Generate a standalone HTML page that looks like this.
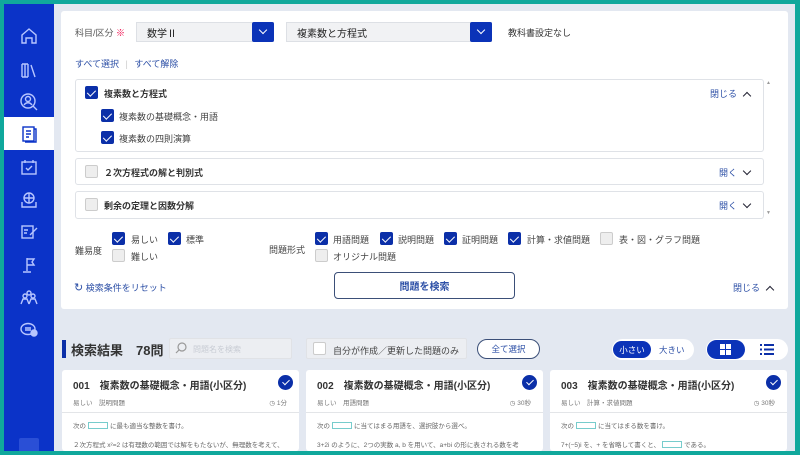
<!DOCTYPE html>
<html><head><meta charset="utf-8"><style>
*{box-sizing:border-box;margin:0;padding:0}
body{width:800px;height:455px;overflow:hidden;background:#10a89c;font-family:"Liberation Sans","Noto Sans CJK JP",sans-serif;color:#333;position:relative}
.a{position:absolute}
#main{left:4px;top:4px;width:791px;height:447px;background:#e3e8f1;overflow:hidden}
#side{left:4px;top:4px;width:50px;height:447px;background:#0b33c8}
.ic{position:absolute;left:15px;width:20px;height:20px}
.panel{left:61px;top:11px;width:727px;height:298px;background:#fff;border-radius:3px}
.sel{height:20px;background:#f1f2f4;border:1px solid #dde0e5;font-size:10px;padding-left:10px;color:#222;display:flex;align-items:center}
.btn{position:absolute;right:-1px;top:-1px;width:22px;height:20px;background:#0b33b8;border-radius:2px}
.btn:after{content:"";position:absolute;left:8px;top:5px;width:5px;height:5px;border-right:1.5px solid #fff;border-bottom:1.5px solid #fff;transform:rotate(45deg)}
.box{border:1px solid #dfe2e7;border-radius:3px;background:#fff}
.cb{position:absolute;width:13px;height:13px;border-radius:2px;background:#0b2fa8}
.cb:after{content:"";position:absolute;left:4px;top:1.5px;width:3.5px;height:7px;border-right:1.7px solid #fff;border-bottom:1.7px solid #fff;transform:rotate(45deg)}
.ucb{position:absolute;width:13px;height:13px;border-radius:2px;background:#eee;border:1px solid #ccc}
.t{position:absolute;font-size:9px;white-space:nowrap;color:#444}
.b{font-weight:bold;color:#333}
.lnk{color:#2c4fa6}
.up,.dn{display:inline-block;width:6px;height:6px;border-left:1.8px solid #223;border-top:1.8px solid #223;margin-left:7px}
.up{transform:rotate(45deg);vertical-align:-2px}
.dn{transform:rotate(225deg);vertical-align:2px}
.card{position:absolute;top:370px;width:237px;height:81px;background:#fff;border-radius:3px;overflow:hidden}
.card .h{position:absolute;left:11px;top:7px;font-size:10px;font-weight:bold;color:#333}
.card .s{position:absolute;left:11px;top:27px;font-size:6.5px;color:#777}
.card .tm{position:absolute;right:12px;top:27px;font-size:6.5px;color:#777}
.card .ok{position:absolute;right:6px;top:5px;width:15px;height:15px;border-radius:50%;background:#0b2fa8}
.card .ok:after{content:"";position:absolute;left:5.5px;top:3px;width:3px;height:6px;border-right:1.7px solid #fff;border-bottom:1.7px solid #fff;transform:rotate(45deg)}
.card .ln{position:absolute;left:0;right:0;top:42px;border-top:1px solid #e3e5e8}
.card .p{position:absolute;left:11px;font-size:6.5px;color:#666;white-space:nowrap}
.bx{display:inline-block;width:20px;height:7px;border:1px solid #7cc;vertical-align:-1px;margin:0 2px}
.fc{display:flex;align-items:center;justify-content:center}
</style></head><body>
<div id="main" class="a"></div>
<div id="side" class="a">
 <svg class="ic" style="top:22px" viewBox="0 0 20 20" fill="none" stroke="#b8c6ff" stroke-width="1.4"><path d="M3 9l7-6 7 6v8h-4v-5h-6v5H3z"/></svg>
 <svg class="ic" style="top:56px" viewBox="0 0 20 20" fill="none" stroke="#b8c6ff" stroke-width="1.4"><path d="M3 4v13M6 4v13M9 4v13M12 5l4 12M3 4h6M3 17h6"/></svg>
 <svg class="ic" style="top:88px" viewBox="0 0 20 20" fill="none" stroke="#b8c6ff" stroke-width="1.4"><circle cx="9" cy="9" r="7"/><circle cx="9" cy="7" r="2.5"/><path d="M5 13c2-3 6-3 8 0M14 14l4 4"/></svg>
 <div class="a" style="left:0;top:113px;width:50px;height:33px;background:#fff"></div>
 <svg class="ic" style="top:120px" viewBox="0 0 20 20" fill="none" stroke="#0b33c8" stroke-width="1.4"><rect x="4" y="3" width="11" height="14"/><path d="M7 7h5M7 10h5M7 13h3M15 5h2v13H6"/></svg>
 <svg class="ic" style="top:154px" viewBox="0 0 20 20" fill="none" stroke="#b8c6ff" stroke-width="1.4"><rect x="3" y="4" width="14" height="12"/><path d="M6 2v3M14 2v3M7 10l2 2 4-4"/></svg>
 <svg class="ic" style="top:186px" viewBox="0 0 20 20" fill="none" stroke="#b8c6ff" stroke-width="1.4"><circle cx="10" cy="8" r="5"/><path d="M5 8h10M10 3v10M3 12v5h14v-5"/></svg>
 <svg class="ic" style="top:218px" viewBox="0 0 20 20" fill="none" stroke="#b8c6ff" stroke-width="1.4"><rect x="3" y="4" width="11" height="12"/><path d="M5 8h4M5 11h3M11 13l7-7"/></svg>
 <svg class="ic" style="top:251px" viewBox="0 0 20 20" fill="none" stroke="#b8c6ff" stroke-width="1.4"><path d="M8 3v13M8 4h7l-2 3 2 3H8M4 17h8"/></svg>
 <svg class="ic" style="top:284px" viewBox="0 0 20 20" fill="none" stroke="#b8c6ff" stroke-width="1.4"><circle cx="6" cy="8" r="2"/><circle cx="14" cy="8" r="2"/><circle cx="10" cy="5" r="2"/><path d="M2 16l2-5h4l2 5M10 16l2-5h4l2 5"/></svg>
 <svg class="ic" style="top:316px" viewBox="0 0 20 20" fill="none" stroke="#b8c6ff" stroke-width="1.4"><ellipse cx="9" cy="9" rx="7" ry="5.5"/><path d="M6 8h6M6 10h6"/><circle cx="15" cy="13" r="3" fill="#b8c6ff"/></svg>
 <div class="a" style="left:15px;top:434px;width:20px;height:14px;background:#2a4fd6;border-radius:2px"></div>
</div>

<div class="a panel"></div>
<div class="t" style="left:75px;top:26px;color:#555">科目/区分 <span style="color:#e04">※</span></div>
<div class="a sel" style="left:136px;top:22px;width:138px">数学Ⅱ<div class="btn"></div></div>
<div class="a sel" style="left:286px;top:22px;width:206px">複素数と方程式<div class="btn"></div></div>
<div class="t" style="left:508px;top:26px;color:#333">教科書設定なし</div>
<div class="t lnk" style="left:75px;top:57px">すべて選択 <span style="color:#ccc;margin:0 4px">|</span> すべて解除</div>

<div class="a box" style="left:75px;top:79px;width:689px;height:73px"></div>
<div class="cb" style="left:85px;top:86px"></div><div class="t b" style="left:104px;top:87px">複素数と方程式</div>
<div class="t lnk" style="left:710px;top:87px">閉じる<span class="up"></span></div>
<div class="cb" style="left:101px;top:109px"></div><div class="t" style="left:119px;top:110px">複素数の基礎概念・用語</div>
<div class="cb" style="left:101px;top:131px"></div><div class="t" style="left:119px;top:132px">複素数の四則演算</div>
<div class="a box" style="left:75px;top:158px;width:689px;height:27px"></div>
<div class="ucb" style="left:85px;top:165px"></div><div class="t b" style="left:104px;top:166px">２次方程式の解と判別式</div>
<div class="t lnk" style="left:719px;top:166px">開く<span class="dn"></span></div>
<div class="a box" style="left:75px;top:191px;width:689px;height:28px"></div>
<div class="ucb" style="left:85px;top:198px"></div><div class="t b" style="left:104px;top:199px">剰余の定理と因数分解</div>
<div class="t lnk" style="left:719px;top:199px">開く<span class="dn"></span></div>
<div class="t" style="left:766px;top:80px;font-size:5px;color:#999">▲</div>
<div class="t" style="left:766px;top:210px;font-size:5px;color:#999">▼</div>

<div class="t" style="left:75px;top:244px">難易度</div>
<div class="cb" style="left:112px;top:232px"></div><div class="t" style="left:131px;top:233px">易しい</div>
<div class="cb" style="left:168px;top:232px"></div><div class="t" style="left:186px;top:233px">標準</div>
<div class="ucb" style="left:112px;top:249px"></div><div class="t" style="left:131px;top:250px">難しい</div>
<div class="t" style="left:269px;top:243px">問題形式</div>
<div class="cb" style="left:315px;top:232px"></div><div class="t" style="left:333px;top:233px">用語問題</div>
<div class="cb" style="left:380px;top:232px"></div><div class="t" style="left:398px;top:233px">説明問題</div>
<div class="cb" style="left:444px;top:232px"></div><div class="t" style="left:462px;top:233px">証明問題</div>
<div class="cb" style="left:508px;top:232px"></div><div class="t" style="left:527px;top:233px">計算・求値問題</div>
<div class="ucb" style="left:600px;top:232px"></div><div class="t" style="left:619px;top:233px">表・図・グラフ問題</div>
<div class="ucb" style="left:315px;top:249px"></div><div class="t" style="left:333px;top:250px">オリジナル問題</div>

<div class="t lnk" style="left:74px;top:281px"><span style="font-size:11px">↻</span> 検索条件をリセット</div>
<div class="a fc" style="left:334px;top:272px;width:181px;height:27px;border:1.5px solid #3b4f78;border-radius:4px;font-size:10px;color:#2c4fa6;font-weight:bold">問題を検索</div>
<div class="t lnk" style="left:733px;top:281px">閉じる<span class="up"></span></div>

<div class="a" style="left:62px;top:340px;width:4px;height:18px;background:#0b2fa8"></div>
<div class="t b" style="left:71px;top:340px;font-size:13px">検索結果　78問</div>
<div class="a" style="left:169px;top:338px;width:123px;height:21px;background:#eceef2;border:1px solid #e0e2e6;border-radius:2px"></div>
<svg class="a" style="left:175px;top:342px" width="12" height="12" viewBox="0 0 12 12" fill="none" stroke="#999" stroke-width="1.2"><circle cx="7" cy="5" r="4"/><path d="M4 8l-3 3"/></svg>
<div class="t" style="left:193px;top:344px;font-size:8px;color:#c8ccd4">問題名を検索</div>
<div class="a" style="left:306px;top:338px;width:161px;height:21px;background:#eceef2;border:1px solid #e0e2e6;border-radius:2px"></div>
<div class="ucb" style="left:313px;top:342px;background:#fff"></div><div class="t" style="left:333px;top:344px">自分が作成／更新した問題のみ</div>
<div class="a fc" style="left:477px;top:339px;width:63px;height:20px;border:1px solid #3b4f78;border-radius:10px;background:#fff;font-size:8.5px;color:#2c4fa6">全て選択</div>
<div class="a" style="left:612px;top:339px;width:82px;height:21px;background:#fff;border-radius:11px"></div>
<div class="a fc" style="left:613px;top:341px;width:38px;height:17px;background:#0b33b8;border-radius:9px;color:#fff;font-size:8.5px">小さい</div>
<div class="t lnk" style="left:659px;top:344px;font-size:8.5px">大きい</div>
<div class="a" style="left:706px;top:339px;width:82px;height:21px;background:#fff;border-radius:11px"></div>
<div class="a" style="left:707px;top:340px;width:38px;height:19px;background:#0b33b8;border-radius:10px"></div>
<svg class="a" style="left:720px;top:344px" width="11" height="11" viewBox="0 0 11 11" fill="#fff"><rect x="0" y="0" width="5" height="5"/><rect x="6" y="0" width="5" height="5"/><rect x="0" y="6" width="5" height="5"/><rect x="6" y="6" width="5" height="5"/></svg>
<svg class="a" style="left:760px;top:344px" width="14" height="11" viewBox="0 0 14 11" fill="#0b2fa8"><rect x="0" y="0" width="2" height="2"/><rect x="4" y="0" width="10" height="2"/><rect x="0" y="4.5" width="2" height="2"/><rect x="4" y="4.5" width="10" height="2"/><rect x="0" y="9" width="2" height="2"/><rect x="4" y="9" width="10" height="2"/></svg>

<div class="card" style="left:62px"><div class="h">001　複素数の基礎概念・用語(小区分)</div><div class="ok"></div><div class="s">易しい　説明問題</div><div class="tm">◷ 1分</div><div class="ln"></div>
<div class="p" style="top:50px">次の<span class="bx"></span>に最も適当な整数を書け。</div><div class="p" style="top:69px">２次方程式 x²=2 は有理数の範囲では解をもたないが、無理数を考えて、</div></div>
<div class="card" style="left:306px"><div class="h">002　複素数の基礎概念・用語(小区分)</div><div class="ok"></div><div class="s">易しい　用語問題</div><div class="tm">◷ 30秒</div><div class="ln"></div>
<div class="p" style="top:50px">次の<span class="bx"></span>に当てはまる用語を、選択肢から選べ。</div><div class="p" style="top:69px">3+2i のように、2つの実数 a, b を用いて、a+bi の形に表される数を考</div></div>
<div class="card" style="left:550px"><div class="h">003　複素数の基礎概念・用語(小区分)</div><div class="ok"></div><div class="s">易しい　計算・求値問題</div><div class="tm">◷ 30秒</div><div class="ln"></div>
<div class="p" style="top:50px">次の<span class="bx"></span>に当てはまる数を書け。</div><div class="p" style="top:69px">7+(−5)i を、+ を省略して書くと、<span class="bx"></span>である。</div></div>
<div class="a" style="left:0;top:451px;width:800px;height:4px;background:#10a89c;z-index:10"></div>
</body></html>
